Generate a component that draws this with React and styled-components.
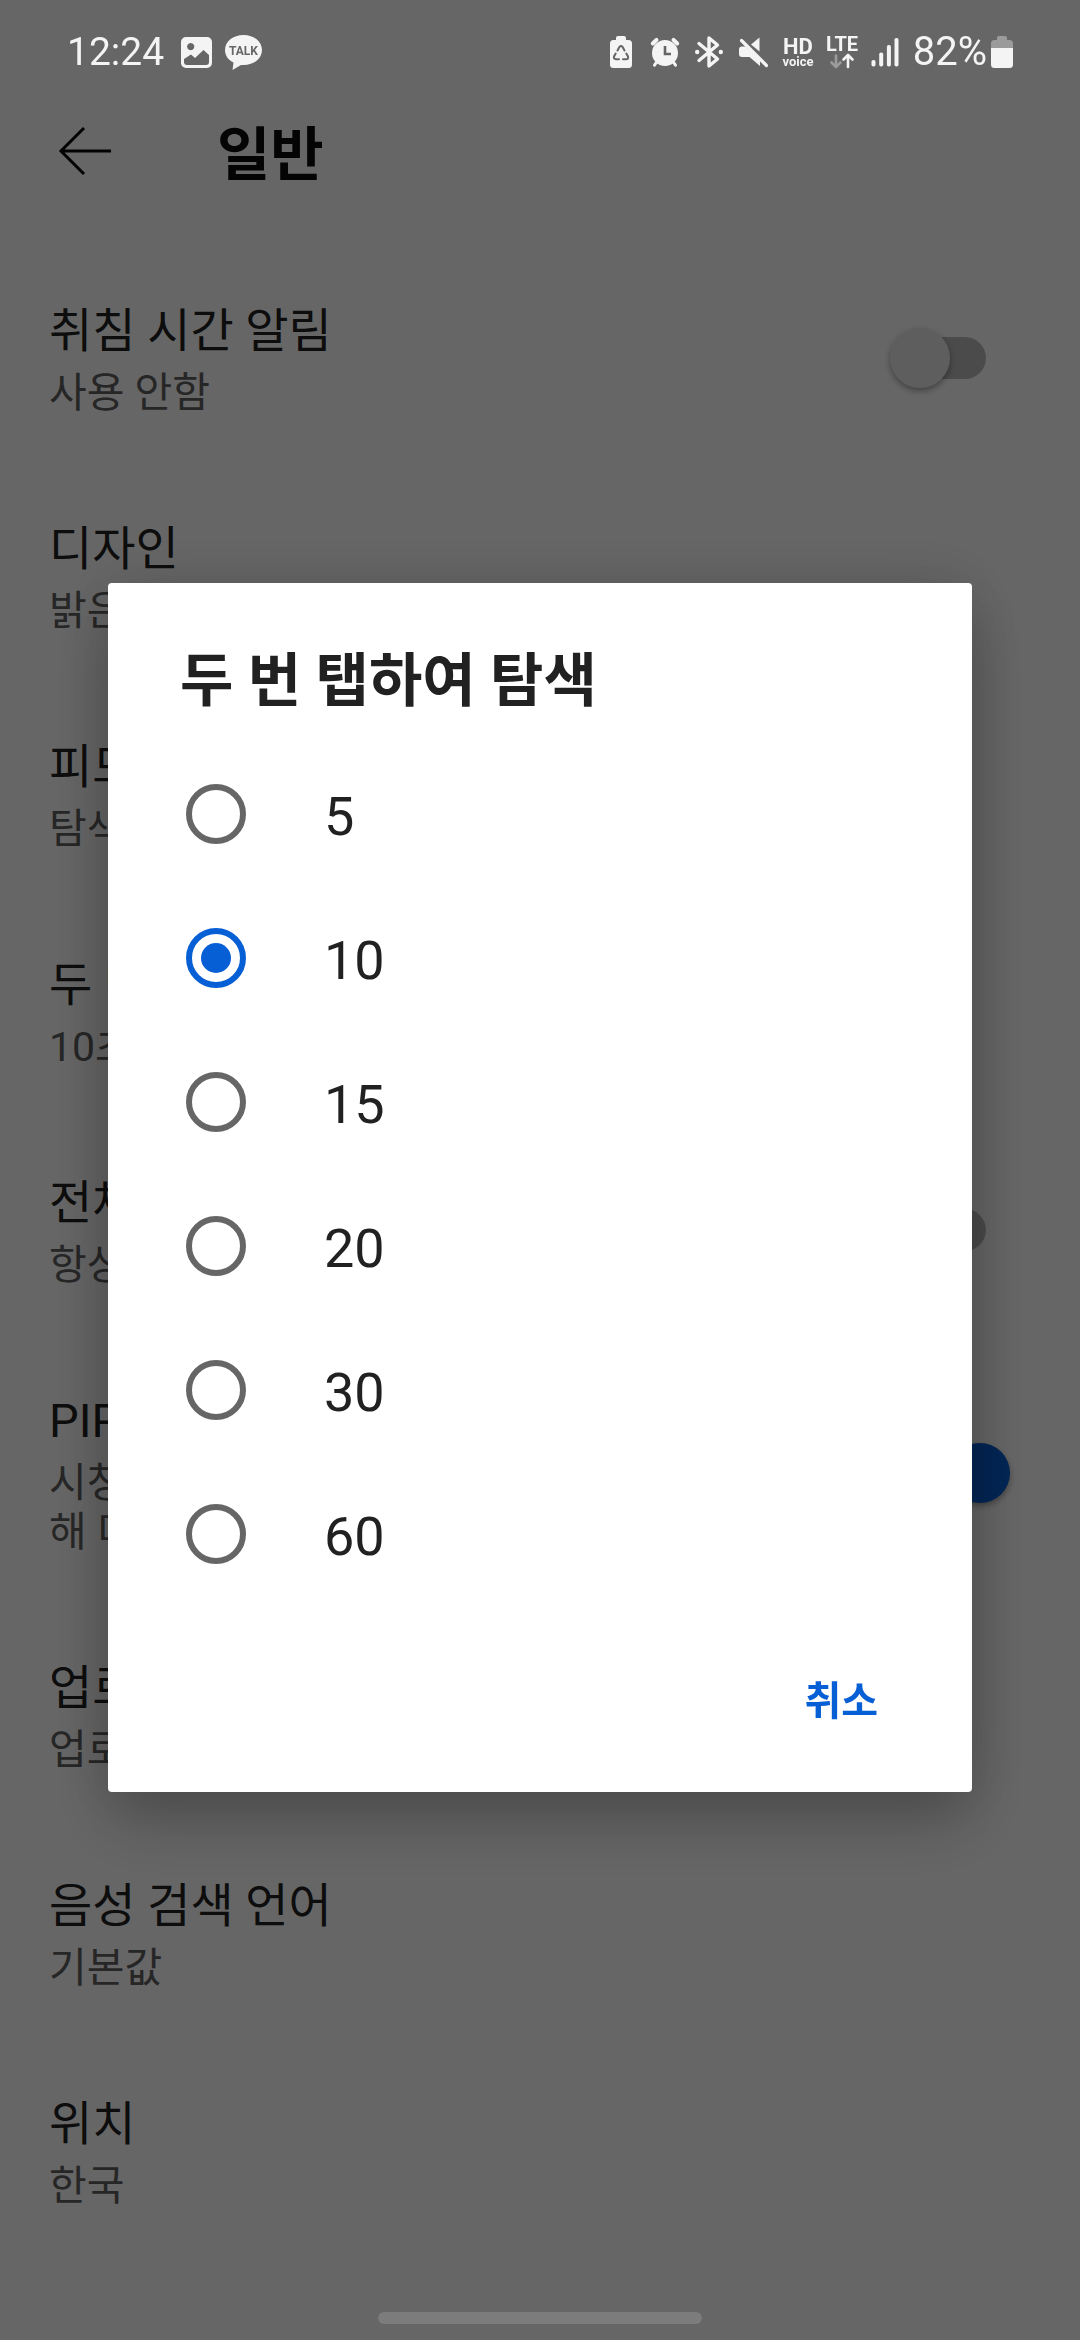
import React, { useState } from "react";
import styled, { createGlobalStyle } from "styled-components";

const GlobalStyle = createGlobalStyle`
  *, *::before, *::after { box-sizing: border-box; }
  html, body { margin: 0; background: #fff; }
  body, button, input { font-family: Roboto, "Noto Sans CJK KR", sans-serif; }
`;

const Screen = styled.div`
  min-height: 100vh;
  display: flex;
  flex-direction: column;
  background: #fff;
`;

const StatusBar = styled.header`
  position: relative;
  z-index: 2;
  height: 102px;
  padding: 2px 67px 0;
  display: flex;
  align-items: center;
  justify-content: space-between;
  color: #f4f4f4;
`;

const StatusGroup = styled.div`
  display: flex;
  align-items: center;
  gap: ${(p) => p.$gap}px;
`;

const StatusText = styled.span`
  font-size: ${(p) => p.$size}px;
  line-height: 48px;
`;

const Glyph = styled.svg`
  display: block;
  flex: none;
  overflow: visible;
  fill: currentColor;
`;

const Toolbar = styled.div`
  height: 98px;
  padding: 0 48px;
  display: flex;
  align-items: center;
  gap: 97px;
`;

const BackButton = styled.button`
  padding: 0;
  border: 0;
  background: none;
  color: #060606;
`;

const PageTitle = styled.h1`
  margin: 0;
  padding-top: 8px;
  font-size: 58px;
  line-height: 76px;
  font-weight: 700;
  color: #0a0a0a;
`;

const SettingsList = styled.main`
  padding-top: 48px;
`;

const SettingRow = styled.label`
  display: flex;
  align-items: center;
  justify-content: space-between;
  gap: 48px;
  padding: 50px 70px 48px 49px;
`;

const SettingText = styled.span`
  display: flex;
  flex-direction: column;
  gap: 10px;
  padding-top: 4px;
`;

const SettingName = styled.span`
  font-size: 47px;
  line-height: 57px;
  color: #212121;
`;

const SettingValue = styled.span`
  font-size: 41px;
  line-height: 49px;
  color: #606060;
  white-space: pre-line;
`;

const Switch = styled.input`
  appearance: none;
  flex: none;
  width: 120px;
  height: 60px;
  margin: 0;
  display: flex;
  align-items: center;
  flex-direction: ${(p) => (p.checked ? "row" : "row-reverse")};

  &::before {
    content: "";
    flex: none;
    width: 72px;
    height: 42px;
    margin: 0 24px;
    border-radius: 21px;
    background: ${(p) => (p.checked ? "#9bbfee" : "#bbb")};
  }

  &::after {
    content: "";
    flex: none;
    z-index: 1;
    width: 60px;
    height: 60px;
    margin: ${(p) => (p.checked ? "0 0 0 -60px" : "0 -60px 0 0")};
    border-radius: 50%;
    background: ${(p) => (p.checked ? "#065fd4" : "#ebebeb")};
    box-shadow: 0 3px 6px rgba(0, 0, 0, 0.35);
  }
`;

const NavBar = styled.footer`
  position: relative;
  z-index: 2;
  margin-top: auto;
  padding-bottom: 16px;
  display: flex;
  justify-content: center;
`;

const NavHandle = styled.div`
  width: 30%;
  height: 12px;
  border-radius: 6px;
  background: #7c7c7c;
`;

const Scrim = styled.div`
  position: fixed;
  inset: 0;
  z-index: 1;
  display: flex;
  align-items: center;
  justify-content: center;
  padding-top: 35px;
  background: rgba(0, 0, 0, 0.6);
`;

const Dialog = styled.section`
  width: 80%;
  border-radius: 4px;
  background: #fff;
  box-shadow: 0 32px 64px rgba(0, 0, 0, 0.22), 0 0 64px rgba(0, 0, 0, 0.14);
`;

const DialogTitle = styled.h2`
  margin: 0;
  padding: 60px 72px 23px;
  font-size: 58px;
  line-height: 76px;
  font-weight: 700;
  color: #212121;
`;

const Options = styled.div`
  display: flex;
  flex-direction: column;
`;

const Option = styled.label`
  height: 144px;
  padding: 0 78px;
  display: flex;
  align-items: center;
  gap: 78px;
`;

const OptionText = styled.span`
  padding-top: 6px;
  font-size: 54px;
  line-height: 64px;
  color: #212121;
`;

const Radio = styled.input`
  appearance: none;
  width: 60px;
  height: 60px;
  margin: 0;
  border: 6px solid #666;
  border-radius: 50%;
  display: grid;
  place-items: center;

  &:checked {
    border-color: #065fd4;
  }

  &:checked::before {
    content: "";
    width: 30px;
    height: 30px;
    border-radius: 50%;
    background: #065fd4;
  }
`;

const Actions = styled.div`
  height: 186px;
  padding: 6px 70px 0;
  display: flex;
  align-items: center;
  justify-content: flex-end;
`;

const TextButton = styled.button`
  padding: 24px;
  border: 0;
  background: none;
  font-size: 40px;
  line-height: 52px;
  font-weight: 700;
  color: #065fd4;
`;

const PictureIcon = () => (
  <Glyph width="31" height="31" viewBox="0 0 31 31">
    <path
      fillRule="evenodd"
      d="M5 0h21a5 5 0 0 1 5 5v21a5 5 0 0 1-5 5H5a5 5 0 0 1-5-5V5a5 5 0 0 1 5-5zM3 22v3a3 3 0 0 0 3 3h19a3 3 0 0 0 3-3V18l-5.500-5-8.500 8-4-3.500zM9.700 6a3.600 3.600 0 1 0 .01 0z"
    />
  </Glyph>
);

const TalkIcon = () => (
  <Glyph width="37" height="35" viewBox="0 0 37 35">
    <path d="M18.500 0C29 0 37 6.500 37 15s-8 15-18.500 15h-2.500L7.500 35l1-7.500C3.300 25 0 20.500 0 15 0 6.500 8 0 18.500 0z" />
    <text x="18.500" y="20" textAnchor="middle" fontSize="12" fontWeight="700" fill="#666">
      TALK
    </text>
  </Glyph>
);

const RecycleBatteryIcon = () => (
  <Glyph width="32" height="32" viewBox="0 0 32 32">
    <path d="M11 4V2a2 2 0 0 1 2-2h6a2 2 0 0 1 2 2v2h2.500A3.500 3.500 0 0 1 27 7.500v21a3.500 3.500 0 0 1-3.500 3.500h-15A3.500 3.500 0 0 1 5 28.500v-21A3.500 3.500 0 0 1 8.500 4z" />
    <g fill="none" stroke="#666" strokeWidth="2" strokeLinecap="round">
      <path d="M12.500 14.500l2-3.700q1.500-1.800 3 0l2 3.700" />
      <path d="M21.300 17.500l1.700 3q.7 2.700-2 2.800h-3" />
      <path d="M14 23.300h-3q-2.700-.3-2-2.800l1.700-3" />
    </g>
  </Glyph>
);

const AlarmIcon = () => (
  <Glyph width="32" height="32" viewBox="0 0 32 32">
    <g fill="none" stroke="currentColor" strokeWidth="4" strokeLinecap="round">
      <path d="M3.800 7.500l3.700-3.700M28.200 7.500l-3.700-3.700" />
      <path d="M8 25.500l-2.500 3.700M24 25.500l2.500 3.700" strokeWidth="3" />
    </g>
    <circle cx="16" cy="17" r="13" />
    <path d="M16 10v8h6" fill="none" stroke="#666" strokeWidth="2.600" />
  </Glyph>
);

const BluetoothIcon = () => (
  <Glyph width="32" height="32" viewBox="0 0 32 32">
    <path
      d="M6 7.500l18.500 15.500-8.500 7V2l8.500 7L6 24.500"
      fill="none"
      stroke="currentColor"
      strokeWidth="3.400"
      strokeLinecap="round"
      strokeLinejoin="round"
    />
    <circle cx="4.200" cy="16" r="2.200" />
    <circle cx="27.800" cy="16" r="2.200" />
  </Glyph>
);

const MuteIcon = () => (
  <Glyph width="32" height="32" viewBox="0 0 32 32">
    <path d="M22.500 1.500v14L14 8.500z" />
    <path d="M5 10.500h3.500L23 24v6l-10.500-9H5a3 3 0 0 1-3-3v-4.500a3 3 0 0 1 3-3z" />
    <path d="M4.500 4.500l25 25" fill="none" stroke="currentColor" strokeWidth="3.200" strokeLinecap="round" />
  </Glyph>
);

const HdVoiceIcon = () => (
  <Glyph width="32" height="32" viewBox="0 0 32 32">
    <text x="17" y="18" textAnchor="middle" fontSize="22" fontWeight="700">
      HD
    </text>
    <text x="17" y="30" textAnchor="middle" fontSize="13" fontWeight="700">
      voice
    </text>
  </Glyph>
);

const LteIcon = () => (
  <Glyph width="32" height="32" viewBox="0 0 32 32">
    <text x="17" y="15" textAnchor="middle" fontSize="20" fontWeight="700">
      LTE
    </text>
    <g fill="none" strokeWidth="2.600" strokeLinecap="round" strokeLinejoin="round">
      <path d="M11 19.500v11M6.500 26.500l4.500 4.500 4.500-4.500" stroke="#9b9b9b" />
      <path d="M23 31V19.500M18.500 23.500l4.500-4.500 4.500 4.500" stroke="currentColor" />
    </g>
  </Glyph>
);

const SignalIcon = () => (
  <Glyph width="32" height="32" viewBox="0 0 32 32">
    <rect x="2.500" y="24" width="4" height="6.500" rx="1.800" />
    <rect x="10.200" y="16.500" width="4" height="14" rx="1.800" />
    <rect x="17.900" y="9" width="4" height="21.500" rx="1.800" />
    <rect x="25.500" y="2" width="4" height="28.500" rx="1.800" />
  </Glyph>
);

const BatteryIcon = () => (
  <Glyph width="22" height="32" viewBox="0 0 22 32">
    <path
      d="M6 4V2a2 2 0 0 1 2-2h6a2 2 0 0 1 2 2v2h2.500A3.500 3.500 0 0 1 22 7.500V12H0V7.500A3.500 3.500 0 0 1 3.500 4z"
      fill="#9b9b9b"
    />
    <path d="M0 12h22v16.500a3.500 3.500 0 0 1-3.500 3.500h-15A3.500 3.500 0 0 1 0 28.500z" />
  </Glyph>
);

const BackIcon = () => (
  <Glyph width="72" height="72" viewBox="0 0 72 72">
    <path d="M63 36H14M36 13L13 36l23 23" fill="none" stroke="currentColor" strokeWidth="3" />
  </Glyph>
);

const settings = [
  { name: "취침 시간 알림", value: "사용 안함", toggle: true },
  { name: "디자인", value: "밝은 테마" },
  { name: "피드", value: "탐색" },
  { name: "두 번 탭", value: "10초" },
  { name: "전체", value: "항상", toggle: true },
  { name: "PIP", value: "시청\n해 미", toggle: true, on: true },
  { name: "업로드", value: "업로드" },
  { name: "음성 검색 언어", value: "기본값" },
  { name: "위치", value: "한국" },
];

const seconds = [5, 10, 15, 20, 30, 60];

function Setting({ name, value, toggle, on = false }) {
  const [checked, setChecked] = useState(on);
  return (
    <SettingRow as={toggle ? "label" : "div"}>
      <SettingText>
        <SettingName>{name}</SettingName>
        <SettingValue>{value}</SettingValue>
      </SettingText>
      {toggle && (
        <Switch
          type="checkbox"
          role="switch"
          checked={checked}
          onChange={(e) => setChecked(e.target.checked)}
        />
      )}
    </SettingRow>
  );
}

export default function App() {
  const [selected, setSelected] = useState(10);
  return (
    <Screen>
      <GlobalStyle />
      <StatusBar>
        <StatusGroup $gap={17}>
          <StatusText $size={39}>12:24</StatusText>
          <StatusGroup $gap={13}>
            <PictureIcon />
            <TalkIcon />
          </StatusGroup>
        </StatusGroup>
        <StatusGroup $gap={12}>
          <RecycleBatteryIcon />
          <AlarmIcon />
          <BluetoothIcon />
          <MuteIcon />
          <HdVoiceIcon />
          <LteIcon />
          <SignalIcon />
          <StatusGroup $gap={4}>
            <StatusText $size={40}>82%</StatusText>
            <BatteryIcon />
          </StatusGroup>
        </StatusGroup>
      </StatusBar>
      <Toolbar>
        <BackButton type="button" aria-label="뒤로">
          <BackIcon />
        </BackButton>
        <PageTitle>일반</PageTitle>
      </Toolbar>
      <SettingsList>
        {settings.map((s) => (
          <Setting key={s.name} {...s} />
        ))}
      </SettingsList>
      <NavBar>
        <NavHandle />
      </NavBar>
      <Scrim>
        <Dialog role="dialog" aria-modal="true" aria-labelledby="seek-title">
          <DialogTitle id="seek-title">두 번 탭하여 탐색</DialogTitle>
          <Options role="radiogroup" aria-labelledby="seek-title">
            {seconds.map((n) => (
              <Option key={n}>
                <Radio
                  type="radio"
                  name="seek"
                  value={n}
                  checked={selected === n}
                  onChange={() => setSelected(n)}
                />
                <OptionText>{n}</OptionText>
              </Option>
            ))}
          </Options>
          <Actions>
            <TextButton type="button">취소</TextButton>
          </Actions>
        </Dialog>
      </Scrim>
    </Screen>
  );
}
